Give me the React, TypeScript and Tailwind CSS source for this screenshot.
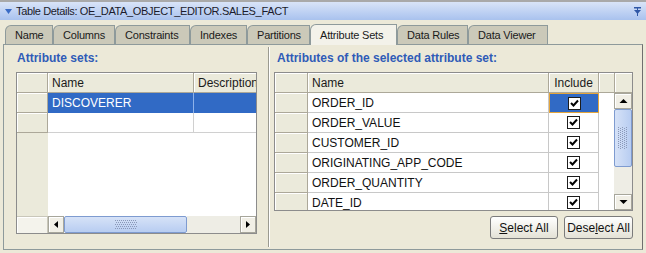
import React from 'react';

const font = { fontFamily: '"Liberation Sans", Arial, sans-serif' };

const tabs = [
  { label: 'Name', w: 'w-[48px]' },
  { label: 'Columns', w: 'w-[62px]' },
  { label: 'Constraints', w: 'w-[75px]' },
  { label: 'Indexes', w: 'w-[57px]' },
  { label: 'Partitions', w: 'w-[63px]' },
  { label: 'Attribute Sets', w: 'w-[87px]', active: true },
  { label: 'Data Rules', w: 'w-[71px]' },
  { label: 'Data Viewer', w: 'w-[80px]' },
];

const attributes = [
  'ORDER_ID',
  'ORDER_VALUE',
  'CUSTOMER_ID',
  'ORIGINATING_APP_CODE',
  'ORDER_QUANTITY',
  'DATE_ID',
];

const headCell =
  'h-[20px] bg-[#ebeadb] border-r border-b border-[#aca899] shadow-[inset_1px_1px_0_#ffffff] flex items-center px-[4px] text-[12px] text-[#1a1a1a] overflow-hidden whitespace-nowrap shrink-0';

const Checkbox = () => (
  <div className="w-[13px] h-[13px] border border-[#1c1c1c] bg-white flex items-center justify-center">
    <svg width="9" height="9" viewBox="0 0 9 9">
      <path d="M1 4 L3.5 6.5 L8 1.5" stroke="#000" strokeWidth="2" fill="none" />
    </svg>
  </div>
);

const Grip = ({ vertical }: { vertical?: boolean }) => (
  <svg width={vertical ? 10 : 22} height={vertical ? 22 : 10}>
    {Array.from({ length: 5 }).flatMap((_, i) =>
      Array.from({ length: 11 }).map((__, j) => {
        const a = j * 2 + (i % 2);
        const b = i * 2;
        return (
          <rect
            key={`${i}-${j}`}
            x={vertical ? b : a}
            y={vertical ? a : b}
            width="1"
            height="1"
            fill="#8a98b8"
          />
        );
      })
    )}
  </svg>
);

const ArrowBtn = ({ dir }: { dir: 'left' | 'right' | 'up' | 'down' }) => {
  const pts = {
    left: '6,1 2,4.5 6,8',
    right: '2,1 6,4.5 2,8',
    up: '0.5,6 4.5,2 8.5,6',
    down: '0.5,2 4.5,6 8.5,2',
  }[dir];
  const horiz = dir === 'left' || dir === 'right';
  return (
    <div
      className={`${horiz ? 'w-[16px] h-full' : 'h-[16px] w-full'} bg-[#f1efe6] border border-[#a7a69b] shadow-[inset_1px_1px_0_#ffffff] flex items-center justify-center shrink-0`}
    >
      <svg width={horiz ? 8 : 9} height={horiz ? 9 : 8}>
        <polygon points={pts} fill="#000" />
      </svg>
    </div>
  );
};

const Button = ({ w, children }: { w: string; children: React.ReactNode }) => (
  <div
    className={`${w} h-[23px] border border-[#7b7b7b] rounded-[3px] bg-gradient-to-b from-[#ffffff] to-[#e4e2d6] flex items-center justify-center text-[12px] text-[#111] whitespace-nowrap`}
  >
    {children}
  </div>
);

const LeftTable = () => (
  <div className="w-[241px] h-[162px] border border-[#8c8c8c] bg-white flex flex-col overflow-hidden">
    <div className="flex">
      <div className={`${headCell} w-[31px]`} />
      <div className={`${headCell} w-[146px]`}>Name</div>
      <div className={`${headCell} w-[63px] border-r-0`}>Description</div>
    </div>
    <div className="flex h-[20px]">
      <div className={`${headCell} w-[31px]`} />
      <div className="w-[146px] bg-[#316ac5] text-white text-[12px] flex items-center px-[4px] border-r border-[#8eb2ea]">
        DISCOVERER
      </div>
      <div className="flex-1 bg-[#316ac5]" />
    </div>
    <div className="flex h-[20px]">
      <div className={`${headCell} w-[31px]`} />
      <div className="w-[146px] border-r border-b border-[#d0d0d0]" />
      <div className="flex-1 border-b border-[#d0d0d0]" />
    </div>
    <div className="flex flex-1">
      <div className="w-[31px] bg-[#ebeadb]" />
      <div className="flex-1 bg-white" />
    </div>
    <div className="flex h-[17px]">
      <div className="w-[31px] bg-[#f4f3ec] border-t border-r border-[#c9c7ba] shadow-[inset_1px_1px_0_#ffffff]" />
      <ArrowBtn dir="left" />
      <div className="w-[123px] border border-[#7e9bd0] rounded-[2px] bg-gradient-to-b from-[#d6e2f7] to-[#b8cdf1] flex items-center justify-center">
        <Grip />
      </div>
      <div className="flex-1 bg-[#eeede5]" />
      <ArrowBtn dir="right" />
    </div>
  </div>
);

const RightTable = () => (
  <div className="w-[359px] h-[139px] border border-[#8c8c8c] bg-white flex flex-col overflow-hidden">
    <div className="flex">
      <div className={`${headCell} w-[33px]`} />
      <div className={`${headCell} w-[241px]`}>Name</div>
      <div className={`${headCell} w-[50px] justify-center`}>Include</div>
      <div className={`${headCell} flex-1 border-r-0`} />
      <div className={`${headCell} w-[18px] border-l border-l-[#aca899] border-r-0`} />
    </div>
    <div className="flex flex-1 overflow-hidden">
      <div className="flex-1 flex flex-col overflow-hidden">
        {attributes.map((a, i) => (
          <div key={a} className="flex h-[20px] shrink-0">
            <div className={`${headCell} w-[33px]`} />
            <div className="w-[241px] shrink-0 border-r border-b border-[#c8c8c8] flex items-center px-[4px] pt-[1px] text-[12px] text-[#111]">
              {a}
            </div>
            <div
              className={`w-[50px] shrink-0 flex items-center justify-center ${
                i === 0
                  ? 'bg-[#316ac5] border border-[#e4a53c]'
                  : 'border-r border-b border-[#c8c8c8]'
              }`}
            >
              <Checkbox />
            </div>
            <div className="flex-1" />
          </div>
        ))}
      </div>
      <div className="w-[18px] flex flex-col bg-[#eeede5] shrink-0">
        <ArrowBtn dir="up" />
        <div className="h-[58px] border border-[#7e9bd0] rounded-[2px] bg-gradient-to-r from-[#d6e2f7] to-[#b8cdf1] flex items-center justify-center">
          <Grip vertical />
        </div>
        <div className="flex-1" />
        <ArrowBtn dir="down" />
      </div>
    </div>
  </div>
);

export default function App() {
  return (
    <div
      style={font}
      className="w-[646px] h-[253px] bg-[#ece9d8] flex flex-col overflow-hidden"
    >
      <div className="h-[2px] bg-[#a9a9a9] shrink-0" />
      <div className="h-[18px] shrink-0 bg-gradient-to-b from-[#d9e4f8] to-[#a9c2ee] flex items-center pl-[5px] pr-[5px]">
        <svg width="7" height="5" className="mr-[4px]">
          <polygon points="0,0 7,0 3.5,5" fill="#3a6cc6" />
        </svg>
        <span className="text-[11px] tracking-[-0.35px] text-[#1b1b2b]">
          Table Details: OE_DATA_OBJECT_EDITOR.SALES_FACT
        </span>
        <div className="flex-1" />
        <svg width="7" height="9">
          <rect x="0" y="0" width="7" height="1.5" fill="#2f57a6" />
          <polygon points="0,3 7,3 3.5,7" fill="#2f57a6" />
          <rect x="3" y="1" width="1" height="8" fill="#2f57a6" />
        </svg>
      </div>
      <div className="h-[3px] shrink-0" />
      <div className="h-[21px] shrink-0 flex items-end pl-[5px]">
        {tabs.map((t) => (
          <div
            key={t.label}
            className={`${t.w} shrink-0 border-t border-l border-r border-[#8e9a9b] rounded-tl-[6px] flex items-center pl-[9px] text-[11px] tracking-[-0.2px] text-[#1a1a1a] whitespace-nowrap ${
              t.active
                ? 'h-[21px] bg-[#f3f2ea] relative z-10 -mb-[1px]'
                : 'h-[19px] bg-[#cbc9b9]'
            }`}
          >
            {t.label}
          </div>
        ))}
      </div>
      <div className="mx-[3px] h-[206px] shrink-0 border border-[#8e9a9b] border-r-[#6f6f6f] bg-[#ece9d8] flex">
        <div className="w-[264px] shrink-0 pl-[12px] pt-[6px] flex flex-col">
          <div className="h-[15px] text-[12px] font-bold text-[#2f5bb7] pl-[1px] leading-[15px]">
            Attribute sets:
          </div>
          <div className="h-[6px]" />
          <LeftTable />
        </div>
        <div className="w-[2px] shrink-0 my-[2px] border-l border-[#9b9a90] border-r border-r-white" />
        <div className="flex-1 pl-[4px] pt-[6px] flex flex-col">
          <div className="h-[15px] text-[12px] font-bold text-[#2f5bb7] pl-[3px] leading-[15px]">
            Attributes of the selected attribute set:
          </div>
          <div className="h-[6px]" />
          <RightTable />
          <div className="flex justify-end gap-[6px] w-[359px] mt-[5px]">
            <Button w="w-[68px]">
              <span className="underline">S</span>elect All
            </Button>
            <Button w="w-[69px]">
              Dese<span className="underline">l</span>ect All
            </Button>
          </div>
        </div>
      </div>
    </div>
  );
}
